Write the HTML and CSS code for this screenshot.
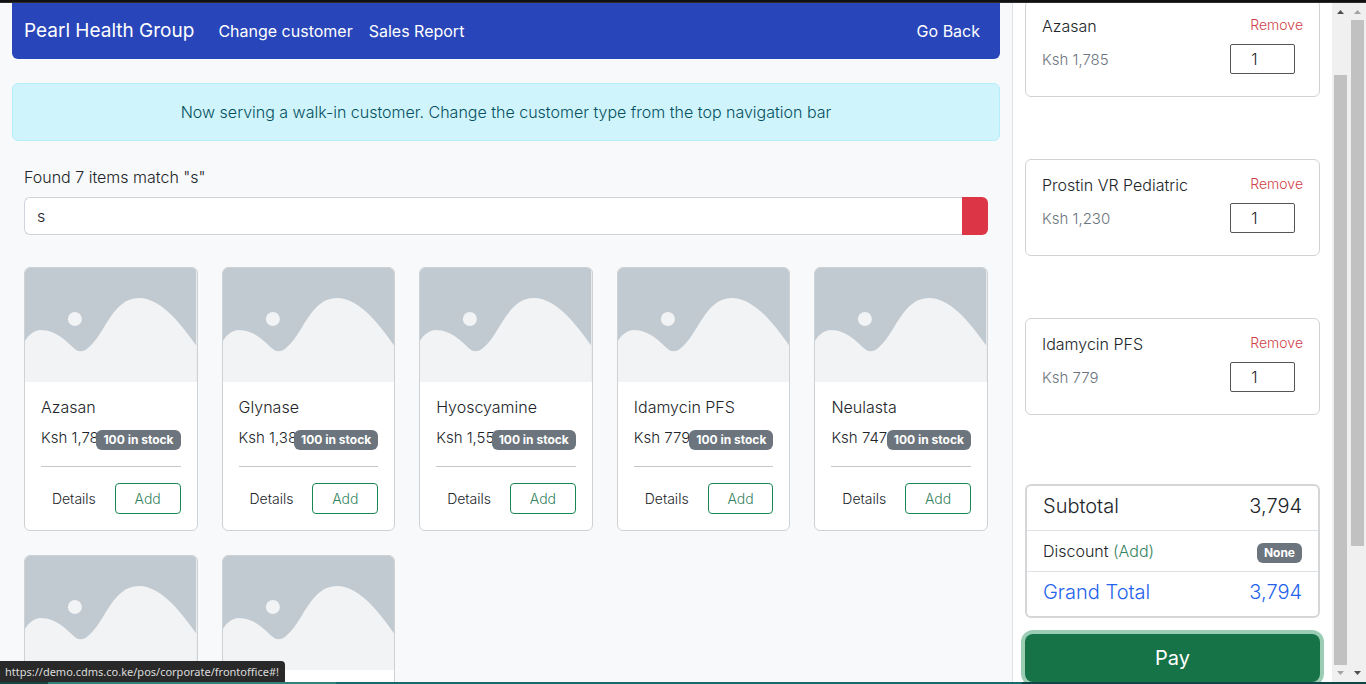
FILE: index.html
```
<!DOCTYPE html>
<html lang="en">
<head>
<meta charset="utf-8">
<title>Front Office</title>
<link rel="stylesheet" href="styles.css">
</head>
<body>
<svg class="defs" aria-hidden="true">
  <symbol id="placeholder" viewBox="0 0 172 114" preserveAspectRatio="none">
    <rect width="172" height="114" fill="#c2cad1"/>
    <path d="M0 73C4 66 10 62 16 62C32 62 43 75 50 81C53 84 58 84 62 81C80 68 87 30 114 30C138 30 159 60 172 78V114H0Z" fill="#f1f3f5"/>
    <circle cx="50" cy="51" r="7" fill="#f1f3f5"/>
  </symbol>
</svg>
<div class="window-edge"></div>
<div class="screen">
  <main class="shop">
    <nav class="navbar">
      <a class="brand" href="#">Pearl Health Group</a>
      <a class="nav-link" href="#">Change customer</a>
      <a class="nav-link" href="#">Sales Report</a>
      <a class="nav-link nav-end" href="#">Go Back</a>
    </nav>
    <div class="alert" role="alert">Now serving a walk-in customer. Change the customer type from the top navigation bar</div>
    <section class="results">
      <label class="found" for="search">Found 7 items match "s"</label>
      <div class="search">
        <input class="search-input" id="search" type="text" value="s">
        <button class="search-clear" type="button" aria-label="Clear search"></button>
      </div>
      <div class="products">
        <article class="product">
          <svg class="product-image"><use href="#placeholder"/></svg>
          <div class="product-body">
            <h2 class="product-name">Azasan</h2>
            <div class="product-info"><span class="product-price">Ksh 1,78</span><span class="badge">100 in stock</span></div>
            <div class="actions"><button class="btn" type="button">Details</button><button class="btn btn-add" type="button">Add</button></div>
          </div>
        </article>
        <article class="product">
          <svg class="product-image"><use href="#placeholder"/></svg>
          <div class="product-body">
            <h2 class="product-name">Glynase</h2>
            <div class="product-info"><span class="product-price">Ksh 1,38</span><span class="badge">100 in stock</span></div>
            <div class="actions"><button class="btn" type="button">Details</button><button class="btn btn-add" type="button">Add</button></div>
          </div>
        </article>
        <article class="product">
          <svg class="product-image"><use href="#placeholder"/></svg>
          <div class="product-body">
            <h2 class="product-name">Hyoscyamine</h2>
            <div class="product-info"><span class="product-price">Ksh 1,55</span><span class="badge">100 in stock</span></div>
            <div class="actions"><button class="btn" type="button">Details</button><button class="btn btn-add" type="button">Add</button></div>
          </div>
        </article>
        <article class="product">
          <svg class="product-image"><use href="#placeholder"/></svg>
          <div class="product-body">
            <h2 class="product-name">Idamycin PFS</h2>
            <div class="product-info"><span class="product-price">Ksh 779</span><span class="badge">100 in stock</span></div>
            <div class="actions"><button class="btn" type="button">Details</button><button class="btn btn-add" type="button">Add</button></div>
          </div>
        </article>
        <article class="product">
          <svg class="product-image"><use href="#placeholder"/></svg>
          <div class="product-body">
            <h2 class="product-name">Neulasta</h2>
            <div class="product-info"><span class="product-price">Ksh 747</span><span class="badge">100 in stock</span></div>
            <div class="actions"><button class="btn" type="button">Details</button><button class="btn btn-add" type="button">Add</button></div>
          </div>
        </article>
        <article class="product">
          <svg class="product-image"><use href="#placeholder"/></svg>
          <div class="product-body"></div>
        </article>
        <article class="product">
          <svg class="product-image"><use href="#placeholder"/></svg>
          <div class="product-body"></div>
        </article>
      </div>
    </section>
  </main>
  <aside class="cart">
    <div class="cart-items">
      <div class="item">
        <div><div class="item-name">Azasan</div><div class="item-price">Ksh 1,785</div></div>
        <div class="item-side"><a class="remove" href="#">Remove</a><input class="qty" type="text" aria-label="Azasan quantity" value="1"></div>
      </div>
      <div class="item">
        <div><div class="item-name">Prostin VR Pediatric</div><div class="item-price">Ksh 1,230</div></div>
        <div class="item-side"><a class="remove" href="#">Remove</a><input class="qty" type="text" aria-label="Prostin VR Pediatric quantity" value="1"></div>
      </div>
      <div class="item">
        <div><div class="item-name">Idamycin PFS</div><div class="item-price">Ksh 779</div></div>
        <div class="item-side"><a class="remove" href="#">Remove</a><input class="qty" type="text" aria-label="Idamycin PFS quantity" value="1"></div>
      </div>
    </div>
    <div class="totals">
      <div class="total-row large"><span>Subtotal</span><span>3,794</span></div>
      <div class="total-row"><span>Discount <a class="add-discount" href="#">(Add)</a></span><span class="badge">None</span></div>
      <div class="total-row large grand"><span>Grand Total</span><span>3,794</span></div>
    </div>
    <button class="pay" type="button">Pay</button>
  </aside>
  <div class="scrollbar inner" aria-hidden="true">
    <svg class="arrow" viewBox="0 0 17 17"><path d="M5 11L8.500 7L12 11Z" fill="#505050"/></svg>
    <div class="track"><div class="thumb"></div></div>
    <svg class="arrow" viewBox="0 0 17 17"><path d="M5 6L8.500 10L12 6Z" fill="#a3a3a3"/></svg>
  </div>
  <div class="scrollbar outer" aria-hidden="true">
    <svg class="arrow" viewBox="0 0 17 17"><path d="M5 11L8.500 7L12 11Z" fill="#a3a3a3"/></svg>
    <div class="track"><div class="thumb"></div></div>
    <svg class="arrow" viewBox="0 0 17 17"><path d="M5 6L8.500 10L12 6Z" fill="#505050"/></svg>
  </div>
  <div class="status">https://demo.cdms.co.ke/pos/corporate/frontoffice#!</div>
</div>
<div class="taskbar-edge"></div>
</body>
</html>
```
FILE: styles.css
```
* { box-sizing: border-box; }
body {
  margin: 0;
  height: 100vh;
  display: flex;
  flex-direction: column;
  overflow: hidden;
  background: #f8f9fa;
  color: #212529;
  font: 300 16px/24px Inter, "Liberation Sans", sans-serif;
}
a { text-decoration: none; }
button, input { font: inherit; color: inherit; }
.defs { position: absolute; width: 0; height: 0; }
.window-edge { flex: none; height: 3px; background: #111; border-bottom: 1px solid #2d2d2d; }
.taskbar-edge {
  flex: none;
  height: 2px;
  background: linear-gradient(90deg, #144645 48px, #35807a 48px 336px, #17696a 336px 1022px, #0d4645 1022px);
}
.screen { position: relative; flex: 1; min-height: 0; display: flex; }

.shop { flex: 1; min-width: 0; padding: 0 12px; overflow: hidden; }
.navbar {
  display: flex;
  align-items: center;
  gap: 16px;
  height: 56px;
  padding: 0 20px 0 12px;
  background: #2845b9;
  border-radius: 0 0 6px 6px;
  color: #fff;
}
.navbar a { color: inherit; white-space: nowrap; }
.brand { font-size: 19px; font-weight: 400; margin-right: 8px; }
.nav-link { font-weight: 400; }
.nav-end { margin-left: auto; }
.alert {
  margin-top: 24px;
  padding: 16px;
  border: 1px solid #b6effb;
  border-radius: 6px;
  background: #cff4fc;
  color: #055160;
  text-align: center;
}
.results { padding: 24px 12px 0; }
.found { display: block; margin-bottom: 8px; }
.search { display: flex; height: 38px; margin-bottom: 32px; }
.search-input {
  flex: 1;
  min-width: 0;
  padding: 6px 12px;
  border: 1px solid #ced4da;
  border-right: 0;
  border-radius: 6px 0 0 6px;
  background: #fff;
}
.search-clear { width: 26px; border: 0; border-radius: 0 6px 6px 0; background: #dc3545; }

.products { display: grid; grid-template-columns: repeat(5, minmax(0, 1fr)); gap: 24px; }
.product {
  min-height: 264px;
  border: 1px solid #cfd2d4;
  border-radius: 6px;
  background: #fff;
  overflow: hidden;
}
.product-image { display: block; width: 100%; height: 114px; }
.product-body { padding: 16px; }
.product-name { margin: 0 0 8px; font-size: 16px; font-weight: 300; line-height: 19px; }
.product-info {
  display: flex;
  align-items: flex-end;
  height: 42px;
  padding-bottom: 16px;
  border-bottom: 1px solid #c4c8ca;
  white-space: nowrap;
}
.product-price { flex: 1; min-width: 0; font-size: 15px; }
.badge {
  padding: 4px 7px;
  border-radius: 6px;
  background: #6c757d;
  color: #fff;
  font-size: 12px;
  font-weight: 700;
  line-height: 12px;
}
.actions { display: grid; grid-template-columns: 1fr 1fr; gap: 8px; margin-top: 16px; }
.btn {
  height: 31px;
  padding: 0;
  border: 1px solid transparent;
  border-radius: 4px;
  background: none;
  font-size: 14px;
  line-height: 21px;
}
.btn-add { border-color: #198754; color: #36845f; }

.cart {
  display: flex;
  flex-direction: column;
  justify-content: flex-end;
  width: 320px;
  padding: 0 12px;
  border-left: 1px solid #dee2e6;
  background: #fff;
  overflow: hidden;
}
.cart-items { display: flex; flex-direction: column; gap: 62px; margin-bottom: 69px; }
.item {
  display: flex;
  justify-content: space-between;
  height: 97px;
  padding: 13px 16px;
  border: 1px solid #d0d3d5;
  border-radius: 6px;
}
.item-price { margin-top: 10px; color: #6c757d; font-size: 15px; }
.item-side { display: flex; flex-direction: column; align-items: flex-end; }
.remove { color: #cf4149; font-size: 14px; line-height: 21px; }
.qty {
  width: 65px;
  height: 30px;
  margin: 9px 8px 0 0;
  padding: 0 16px 0 0;
  border: 1px solid #555;
  border-radius: 2px;
  text-align: center;
  background: #fff;
}
.totals { margin-bottom: 16px; border: 2px solid #d4d6d8; border-radius: 6px; }
.total-row {
  display: flex;
  align-items: baseline;
  justify-content: space-between;
  height: 41px;
  padding: 8px 16px 0;
  border-bottom: 1px solid #dee2e6;
}
.total-row.large { height: 45px; font-size: 20px; }
.total-row.grand { height: 44px; border-bottom: 0; color: #2563eb; }
.add-discount { color: #36845f; }
.pay {
  flex: none;
  height: 48px;
  border: 0;
  border-radius: 8px;
  background: #157347;
  box-shadow: 0 0 0 4px #9bcdb5;
  color: #fff;
  font-size: 20px;
  font-weight: 400;
}

.scrollbar { display: flex; flex-direction: column; width: 17px; background: #f0f0f0; }
.arrow { display: block; width: 17px; height: 17px; }
.track { display: flex; flex-direction: column; flex: 1; padding: 0 2px; }
.thumb { width: 13px; background: #c1c1c1; }
.inner .track { justify-content: flex-end; }
.inner .thumb { height: 590px; max-height: 100%; }
.outer .thumb { height: 526px; max-height: 100%; }
.status {
  position: absolute;
  left: 0;
  bottom: 0;
  padding: 0 6px 0 5px;
  border-radius: 0 4px 0 0;
  background: #292929;
  color: #dcdcdc;
  font: 400 11px/21px "Noto Sans", "Open Sans", sans-serif;
}
```
